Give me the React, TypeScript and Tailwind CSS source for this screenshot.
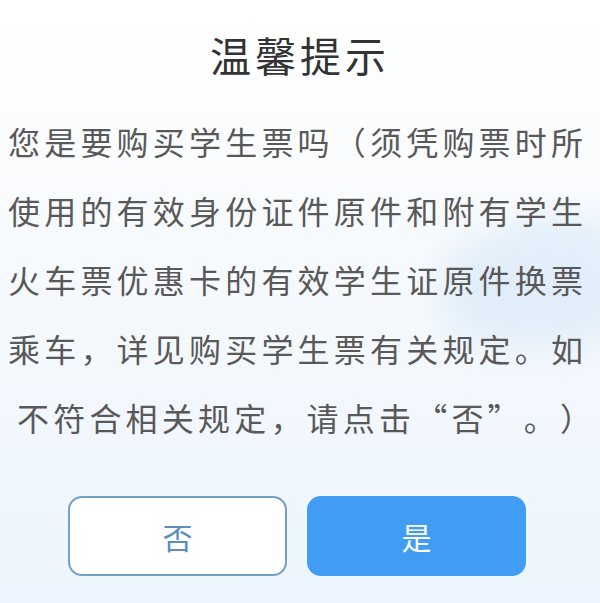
const lines = [
  "您是要购买学生票吗（须凭购票时所",
  "使用的有效身份证件原件和附有学生",
  "火车票优惠卡的有效学生证原件换票",
  "乘车，详见购买学生票有关规定。如",
  "不符合相关规定，请点击“否”。）",
];

const font = {
  fontFamily: '"Noto Sans CJK SC", "Noto Sans", sans-serif',
};

export default function App() {
  return (
    <div
      className="relative w-[600px] h-[603px] overflow-hidden bg-gradient-to-b from-white via-[#f5f9fd] to-[#ecf5fd]"
      style={font}
    >
      {/* soft cloud behind the message */}
      <div className="absolute left-[440px] top-[235px] w-[190px] h-[110px] rounded-full bg-[#d9e9f7] opacity-70 blur-[18px]" />
      <div className="absolute left-[500px] top-[215px] w-[120px] h-[70px] rounded-full bg-[#e2eefa] opacity-70 blur-[16px]" />

      <div className="relative flex flex-col">
        <h1 className="pt-[26px] text-center text-[41px] leading-[56px] tracking-[4px] text-[#333333] font-normal">
          温馨提示
        </h1>

        <div className="mt-[25px] flex flex-col text-[32px] leading-[69px] tracking-[4.2px] text-[#595959] [text-spacing-trim:space-all]">
          {lines.map((line, i) => (
            <div
              key={i}
              className={i === lines.length - 1 ? "pl-[17px] whitespace-nowrap" : "pl-[8px] whitespace-nowrap"}
            >
              {line}
            </div>
          ))}
        </div>

        <div className="mt-[44px] flex justify-center gap-[20px] pr-[6px]">
          <button className="w-[219px] h-[80px] rounded-[14px] border-2 border-[#72a0c6] bg-white text-[30px] text-[#5b8ebe]">
            否
          </button>
          <button className="w-[219px] h-[80px] rounded-[14px] bg-[#419df4] text-[30px] text-white">
            是
          </button>
        </div>
      </div>
    </div>
  );
}
